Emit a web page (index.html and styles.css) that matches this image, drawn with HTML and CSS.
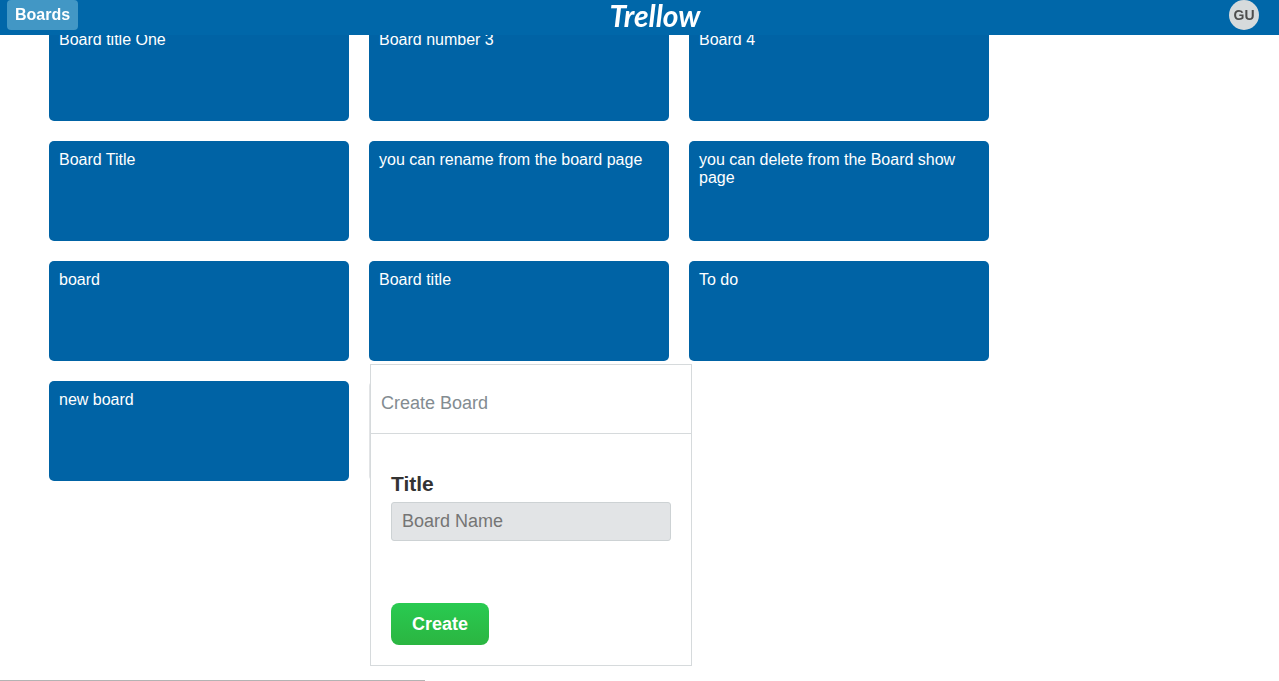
FILE: index.html
```html
<!DOCTYPE html>
<html lang="en">
<head>
  <meta charset="utf-8">
  <meta name="viewport" content="width=device-width, initial-scale=1">
  <title>Boards | Trellow</title>
  <link rel="stylesheet" href="styles.css">
</head>
<body>
  <header class="topbar">
    <button class="boards-button" type="button">Boards</button>
    <a class="logo" href="#">Trellow</a>
    <button class="avatar" type="button">GU</button>
  </header>

  <main class="page">
    <ul class="boards">
      <li><a class="board" href="#">Board title One</a></li>
      <li><a class="board" href="#">Board number 3</a></li>
      <li><a class="board" href="#">Board 4</a></li>
      <li><a class="board" href="#">Board Title</a></li>
      <li><a class="board" href="#">you can rename from the board page</a></li>
      <li><a class="board" href="#">you can delete from the Board show page</a></li>
      <li><a class="board" href="#">board</a></li>
      <li><a class="board" href="#">Board title</a></li>
      <li><a class="board" href="#">To do</a></li>
      <li><a class="board" href="#">new board</a></li>
      <li class="new-board">
        <form class="popup">
          <h2 class="popup-title">Create Board</h2>
          <div class="popup-body">
            <label class="field-label" for="board-name">Title</label>
            <input class="field" id="board-name" type="text" placeholder="Board Name">
            <button class="create-button" type="submit">Create</button>
          </div>
        </form>
      </li>
    </ul>
  </main>

  <div class="status-edge"></div>
</body>
</html>
```

FILE: styles.css
```css
* {
  box-sizing: border-box;
}

body {
  margin: 0;
  background: #fff;
  color: #333;
  font-family: "Liberation Sans", Arial, sans-serif;
  font-size: 16px;
  line-height: 18px;
}

button,
input {
  font: inherit;
}

.topbar {
  position: fixed;
  top: 0;
  left: 0;
  right: 0;
  z-index: 2;
  display: grid;
  grid-template-columns: 1fr auto 1fr;
  align-items: start;
  height: 35px;
  padding: 0 20px 0 7px;
  background: #0067a9;
}

.boards-button {
  justify-self: start;
  height: 30px;
  padding: 0 8px;
  border: 0;
  border-radius: 4px;
  background: #4297c5;
  color: #fff;
  font-weight: bold;
}

.logo {
  padding-left: 44px;
  color: #fff;
  font-family: Lato, sans-serif;
  font-size: 30px;
  font-style: italic;
  font-weight: bold;
  line-height: 30px;
  text-decoration: none;
}

.avatar {
  justify-self: end;
  width: 30px;
  height: 30px;
  padding: 0;
  border: 0;
  border-radius: 50%;
  background: #d6dadc;
  color: #4d4d4d;
  font-size: 14px;
  font-weight: bold;
}

.page {
  min-height: 100vh;
  padding: 21px 49px 0;
}

.boards {
  display: grid;
  grid-template-columns: repeat(auto-fill, 300px);
  gap: 20px;
  max-width: 960px;
  margin: 0;
  padding: 0;
  list-style: none;
}

.board {
  display: block;
  height: 100px;
  padding: 10px;
  border-radius: 5px;
  background: #0063a5;
  color: #fff;
  text-decoration: none;
}

.new-board {
  position: relative;
  border-radius: 5px;
  background: #e2e4e6;
}

.popup {
  position: absolute;
  top: -17px;
  left: 1px;
  width: 322px;
  border: 1px solid #d6dadc;
  background: #fff;
}

.popup-title {
  margin: 0;
  padding: 28px 10px 20px;
  border-bottom: 1px solid #d6dadc;
  color: #838c91;
  font-size: 18px;
  font-weight: normal;
  line-height: 20px;
}

.popup-body {
  display: flex;
  flex-direction: column;
  align-items: flex-start;
  padding: 38px 20px 20px;
}

.field-label {
  margin-bottom: 6px;
  font-size: 21px;
  font-weight: bold;
  line-height: 24px;
}

.field {
  width: 100%;
  height: 39px;
  margin-bottom: 62px;
  padding: 0 10px;
  border: 1px solid #cdd2d4;
  border-radius: 3px;
  background: #e2e4e6;
  font-size: 18px;
}

.field::placeholder {
  color: #757575;
}

.create-button {
  height: 42px;
  padding: 0 21px;
  border: 0;
  border-radius: 8px;
  background: linear-gradient(#29ca51, #2bb541);
  color: #fff;
  font-size: 18px;
  font-weight: bold;
}

.status-edge {
  position: fixed;
  bottom: 0;
  left: 0;
  width: 425px;
  max-width: 100%;
  height: 1px;
  background: #b3b3b3;
}
```
